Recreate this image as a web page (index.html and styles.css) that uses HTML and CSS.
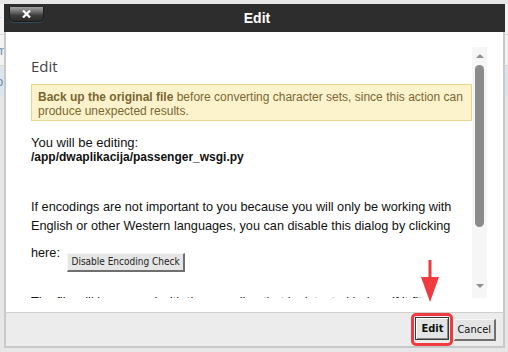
FILE: index.html
```html
<!DOCTYPE html>
<html lang="en">
<head>
    <meta charset="UTF-8">
    <meta name="viewport" content="width=device-width, initial-scale=1.0">
    <title>Edit</title>
    <link rel="stylesheet" href="styles.css">
</head>
<body>

    <!-- File list behind the modal -->
    <div class="page">
        <div class="page-row"><span>r</span></div>
        <div class="page-row"><span>m</span></div>
        <div class="page-row selected"><span>o</span></div>
    </div>

    <!-- Edit dialog -->
    <div class="dialog">
        <div class="dialog-header">
            <button class="close-btn" title="Close">
                <svg width="9" height="8" viewBox="0 0 9 8"><path d="M1 0.5 L8 7.5 M8 0.5 L1 7.5" stroke="#fff" stroke-width="2.2"/></svg>
            </button>
            <h2>Edit</h2>
        </div>

        <div class="dialog-body">
            <div class="scroll-box">
                <div class="scroll-content">
                    <h1>Edit</h1>
                    <div class="alert"><strong>Back up the original file</strong> before converting character sets, since this action can produce unexpected results.</div>
                    <p class="editing">You will be editing:<br><strong>/app/dwaplikacija/passenger_wsgi.py</strong></p>
                    <p class="note">If encodings are not important to you because you will only be working with English or other Western languages, you can disable this dialog by clicking</p>
                    <p class="note here">here: <button class="small-btn">Disable Encoding Check</button></p>
                    <p class="note">The file will be opened with the encoding that is detected below, if it fits.</p>
                </div>
                <div class="scrollbar">
                    <span class="sb-up"></span>
                    <span class="sb-thumb"></span>
                    <span class="sb-down"></span>
                </div>
            </div>

            <!-- red arrow pointing at the Edit button -->
            <svg class="pointer" width="18" height="42" viewBox="0 0 18 42">
                <rect x="7.5" y="0" width="3" height="20" fill="#ef3b3f"/>
                <polygon points="0,17 18,17 9,42" fill="#ef3b3f"/>
            </svg>
        </div>

        <div class="dialog-footer">
            <span class="highlight"><button class="btn btn-default">Edit</button></span>
            <button class="btn">Cancel</button>
        </div>
    </div>

</body>
</html>
```

FILE: styles.css
```css
/* Basic reset */
* {
    margin: 0;
    padding: 0;
    box-sizing: border-box;
}

body {
    width: 508px;
    height: 352px;
    position: relative;
    overflow: hidden;
    background: #e7e7e7;
    font-family: 'Liberation Sans', Arial, sans-serif;
    font-size: 12px;
    color: #222;
}

/* Page behind the modal */
.page {
    padding-top: 4px;
}

.page-row {
    height: 31px;
    display: flex;
    align-items: center;
    background: #f3f3f3;
    border-bottom: 1px solid #d6d6d6;
    font-size: 13px;
    color: #6a8cae;
}

.page-row span {
    margin-left: -4px;
}

.page-row.selected {
    height: 30px;
    background: #dae5ee;
    border-bottom: 0;
}

/* Dialog */
.dialog {
    position: absolute;
    top: 4px;
    left: 4px;
    width: 501px;
    display: flex;
    flex-direction: column;
}

.dialog-header {
    height: 28px;
    background: #2d2d2d;
    display: grid;
    grid-template-columns: 1fr auto 1fr;
    align-items: start;
    padding-left: 5px;
}

.dialog-header h2 {
    font-size: 14px;
    font-weight: 700;
    line-height: 28px;
    color: #fff;
}

.close-btn {
    width: 35px;
    height: 15px;
    margin-top: 3px;
    display: flex;
    justify-content: center;
    align-items: center;
    border: 1px solid #1c1c1c;
    border-top: 0;
    border-radius: 0 0 5px 5px;
    background: linear-gradient(#a3a3a3, #6c6c6c 35%, #3c3c3c 60%, #2b2b2b);
    box-shadow: 0 1px 1px rgba(50, 100, 120, 0.6);
}

.dialog-body {
    position: relative;
    background: #fff;
    border-left: 2px solid #c9c9c9;
    border-right: 2px solid #c9c9c9;
    padding: 15px 16px 14px 25px;
}

.scroll-box {
    height: 251px;
    display: flex;
    overflow: hidden;
}

.scroll-content {
    width: 441px;
    flex-shrink: 0;
    padding-top: 9px;
}

.scroll-content h1 {
    font-family: 'Open Sans', sans-serif;
    font-size: 15px;
    font-weight: 400;
    line-height: 20px;
    color: #444;
}

.alert {
    margin-top: 8px;
    padding: 5px 6px 2px;
    line-height: 14px;
    background: #fcf3cd;
    border: 1px solid #e8d88e;
    color: #7a6733;
}

.editing {
    margin-top: 15px;
    font-size: 13px;
    line-height: 14px;
    color: #111;
}

.editing strong {
    font-size: 12px;
}

.note {
    margin-top: 34px;
    font-size: 12.7px;
    line-height: 19px;
    color: #111;
}

.note.here {
    margin-top: 8px;
}

.note.here + .note {
    margin-top: 21px;
}

.small-btn {
    margin-left: 4px;
    vertical-align: -8px;
    font-family: 'DejaVu Sans Condensed', 'DejaVu Sans', sans-serif;
    font-stretch: condensed;
    font-size: 10px;
    line-height: 12px;
    padding: 2px 3px 2px 3px;
    color: #222;
    background: #e6e6e6;
    border: solid;
    border-width: 1px 2px 2px 1px;
    border-color: #f6f6f6 #6f6f6f #6f6f6f #f6f6f6;
}

/* Fake scrollbar */
.scrollbar {
    width: 15px;
    background: #f6f6f6;
    display: flex;
    flex-direction: column;
    align-items: center;
    padding: 7px 0 10px;
}

.sb-up,
.sb-down {
    width: 0;
    height: 0;
    border-left: 4px solid transparent;
    border-right: 4px solid transparent;
}

.sb-up {
    border-bottom: 4px solid #8e8e8e;
}

.sb-down {
    margin-top: auto;
    border-top: 4px solid #8e8e8e;
}

.sb-thumb {
    width: 9px;
    height: 162px;
    margin-top: 7px;
    border-radius: 5px;
    background: #8b8b8b;
}

.pointer {
    position: absolute;
    left: 415px;
    top: 228px;
}

/* Footer buttons */
.dialog-footer {
    height: 36px;
    display: flex;
    justify-content: flex-end;
    align-items: center;
    gap: 1px;
    padding-right: 7px;
    background: #ececec;
    border: 2px solid #c9c9c9;
    border-top: 1px solid #cfcfcf;
}

.highlight {
    display: inline-flex;
    padding: 1px 1px 3px;
    border: 3px solid #ef3b3f;
    border-radius: 5px;
}

.btn {
    font-family: 'DejaVu Sans Condensed', 'DejaVu Sans', sans-serif;
    font-stretch: condensed;
    font-size: 11px;
    line-height: 13px;
    padding: 3px 3px 3px 2px;
    color: #111;
    background: #e4e4e4;
    border: solid;
    border-width: 1px 2px 2px 1px;
    border-color: #f6f6f6 #6f6f6f #6f6f6f #f6f6f6;
}

.btn-default {
    font-weight: 700;
    padding: 4px 5px;
    border: 1px solid #3a3a3a;
    box-shadow: inset 1px 1px #fff, inset -1px -1px #8a8a8a;
}
```
